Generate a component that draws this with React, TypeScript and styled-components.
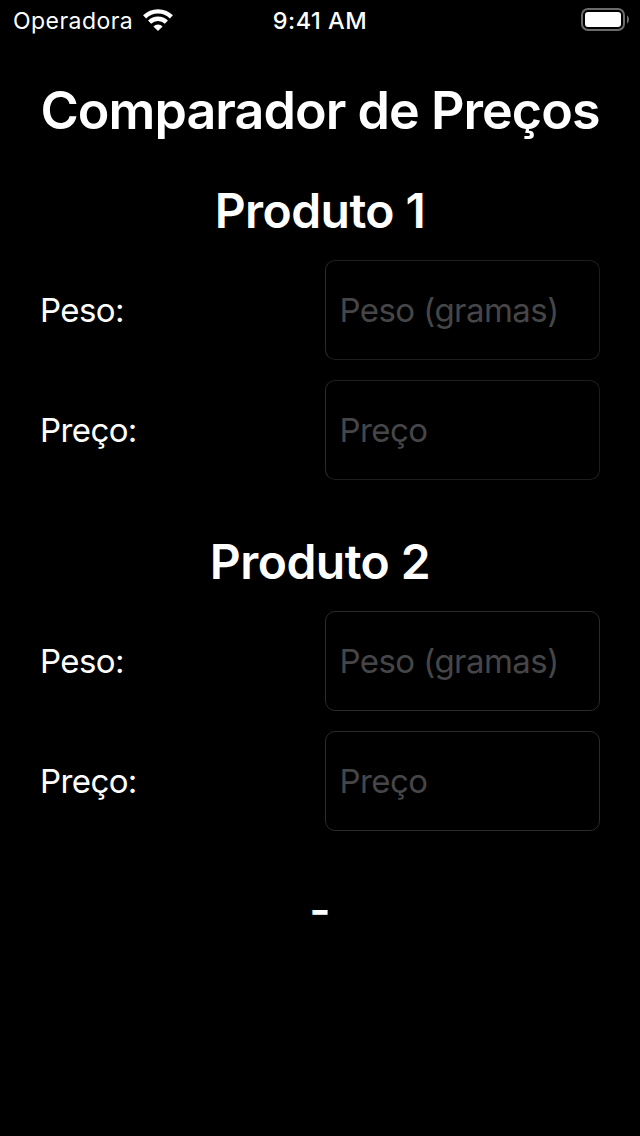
import React from 'react';
import styled, { createGlobalStyle } from 'styled-components';

const GlobalStyle = createGlobalStyle`
  * { box-sizing: border-box; }
  body { margin: 0; background: #000; color: #fff; font-family: Inter, sans-serif; }
`;
const Screen = styled.main`
  width: 640px; height: 1136px; overflow: hidden; background: #000;
  display: flex; flex-direction: column;
`;
const StatusBar = styled.header`
  height: 40px; padding: 0 11px 0 13px; display: grid;
  grid-template-columns: 1fr auto 1fr; align-items: center;
  font-size: 23px;
`;
const Carrier = styled.div`
  display: flex; align-items: center; gap: 9.6px; letter-spacing: 0.45px;
  span { padding-top: 2px; }
`;
const Time = styled.div`
  font-weight: 550; font-size: 23.5px; letter-spacing: 0.5px; line-height: 28px; padding: 2px 2px 0 0;
`;
const Battery = styled.svg`justify-self: end;`;
const Content = styled.div`
  padding: 40px 40px 0; display: flex; flex-direction: column;
`;
const Title = styled.h1`
  margin: 0 -10px; height: 60px; line-height: 62px; font-size: 52px; font-weight: 600;
  text-align: center; white-space: nowrap; letter-spacing: -0.95px;
`;
const Product = styled.section`
  margin-top: 40px; display: flex; flex-direction: column; gap: 20px;
  & + & { margin-top: 51px; }
`;
const Heading = styled.h2`
  margin: 0; height: 60px; line-height: 62px; font-size: 48px; font-weight: 600;
  text-align: center; letter-spacing: -0.55px;
`;
const Row = styled.label`
  display: grid; grid-template-columns: 1fr 275px; align-items: center;
  font-size: 33px; letter-spacing: -0.6px;
`;
const Field = styled.input<{ $edge: string }>`
  width: 275px; height: 100px; padding: 0 13.4px; border: 1px solid ${(p) => p.$edge}; border-radius: 10px;
  border-left-color: #2b2b2b;
  background: #000; color: #fff; font: inherit; letter-spacing: -0.55px; outline: none;
  &::placeholder { color: #464648; opacity: 1; }
`;
const Result = styled.output`
  margin-top: 50px; height: 60px; line-height: 57px; font-size: 46px; font-weight: 600; text-align: center;
`;

const products = [
  { id: 1, edge: '#1e1e1e' },
  { id: 2, edge: '#2b2b2b' },
];

function App() {
  return (
    <Screen>
      <GlobalStyle />
      <StatusBar>
        <Carrier>
          <span>Operadora</span>
          <svg width="30" height="22" viewBox="0 0 30 22" fill="none" stroke="#fff" strokeWidth="4.4">
            <path d="M1.6 7.8a19.2 19.2 0 0 1 26.8 0M6.6 13.2a12.1 12.1 0 0 1 16.8 0" />
            <path d="M15 22l-4.6-4.6a6.5 6.5 0 0 1 9.2 0z" fill="#fff" stroke="none" />
          </svg>
        </Carrier>
        <Time>9:41 AM</Time>
        <Battery width="48" height="24" viewBox="0 0 48 24">
          <rect x="1" y="1" width="42" height="21" rx="6" fill="none" stroke="#6b6b6b" strokeWidth="2" />
          <rect x="4" y="4" width="36" height="15" rx="3" fill="#fff" />
          <path d="M46 7.5c2.6 1 2.6 7 0 8z" fill="#6b6b6b" />
        </Battery>
      </StatusBar>
      <Content>
        <Title>Comparador de Preços</Title>
        {products.map(({ id, edge }) => (
          <Product key={id}>
            <Heading>Produto {id}</Heading>
            <Row>Peso:<Field $edge={edge} placeholder="Peso (gramas)" /></Row>
            <Row>Preço:<Field $edge={edge} placeholder="Preço" /></Row>
          </Product>
        ))}
        <Result>-</Result>
      </Content>
    </Screen>
  );
}
export default App;
